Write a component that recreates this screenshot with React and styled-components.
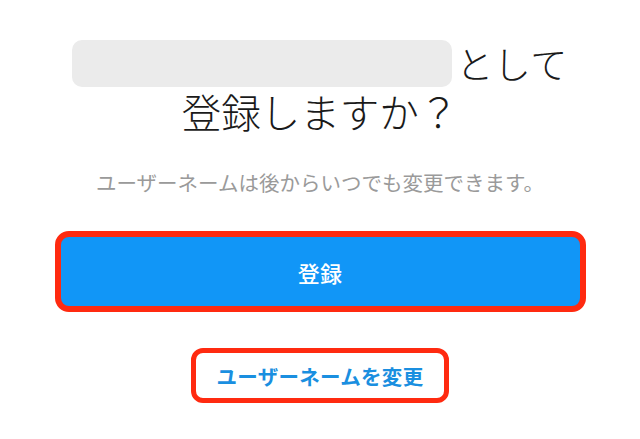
import React from 'react';
import styled, { createGlobalStyle } from 'styled-components';

const GlobalStyle = createGlobalStyle`
  html, body {
    margin: 0;
    padding: 0;
    background: #ffffff;
  }
  body {
    font-family: "Noto Sans CJK JP", "Noto Sans", sans-serif;
  }
`;

const Page = styled.div`
  width: 640px;
  height: 439px;
  display: flex;
  flex-direction: column;
  align-items: center;
  padding-top: 40px;
  box-sizing: border-box;
  overflow: hidden;
`;

const TitleRow = styled.div`
  display: flex;
  align-items: center;
  gap: 4px;
`;

const NameBlank = styled.div`
  width: 380px;
  height: 47px;
  border-radius: 10px;
  background: #ebebeb;
`;

const TitleText = styled.span`
  font-size: ${(p) => p.size || 38}px;
  font-weight: 300;
  color: #1a1a1a;
  line-height: 47px;
  letter-spacing: ${(p) => p.spacing || 0}px;
`;

const Subtitle = styled.p`
  margin: 34px 0 0;
  font-size: 20.5px;
  color: #9a9a9a;
  line-height: 28px;
`;

const Outline = styled.div`
  box-sizing: border-box;
  width: ${(p) => p.w}px;
  height: ${(p) => p.h}px;
  border: ${(p) => p.bw}px solid #ff2a10;
  border-radius: ${(p) => p.r}px;
  margin-top: ${(p) => p.mt}px;
  background: ${(p) => p.bg};
  display: flex;
  align-items: center;
  justify-content: center;
`;

const ButtonLabel = styled.span`
  font-size: ${(p) => p.size}px;
  font-weight: ${(p) => p.weight};
  color: ${(p) => p.color};
  letter-spacing: 0.3px;
`;

export default function App() {
  return (
    <>
      <GlobalStyle />
      <Page>
        <TitleRow>
          <NameBlank />
          <TitleText size={37} spacing={0.5}>として</TitleText>
        </TitleRow>
        <TitleRow>
          <TitleText size={39.5}>登録しますか？</TitleText>
        </TitleRow>
        <Subtitle>ユーザーネームは後からいつでも変更できます。</Subtitle>
        <Outline w={531} h={81} bw={6} r={14} mt={35} bg="#1196f7">
          <ButtonLabel size={22} weight={500} color="#ffffff">登録</ButtonLabel>
        </Outline>
        <Outline w={258} h={55} bw={5} r={12} mt={36} bg="#ffffff">
          <ButtonLabel size={20.5} weight={700} color="#1a8fe0">ユーザーネームを変更</ButtonLabel>
        </Outline>
      </Page>
    </>
  );
}
